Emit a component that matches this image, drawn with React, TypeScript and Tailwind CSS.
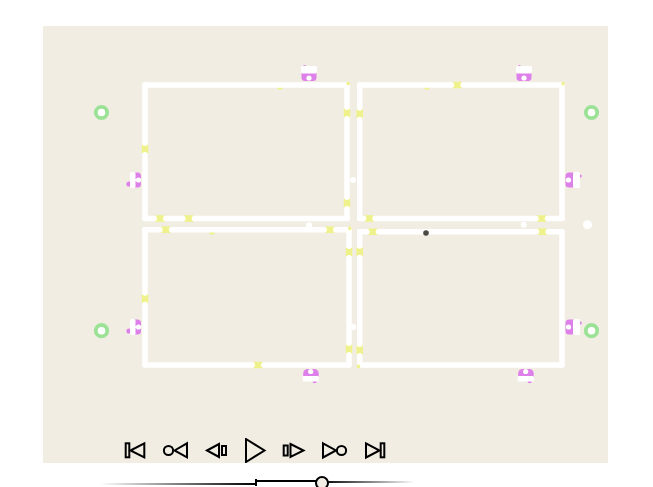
const YELLOW = "#eff28a";
const PINK = "#de80ea";
const GREEN = "#9ce296";

type Gap = [number, number];

// one wall: yellow shows through wherever the white stroke has a gap
function Wall({ x1, y1, x2, y2, gaps }: { x1: number; y1: number; x2: number; y2: number; gaps: number[] }) {
  const horizontal = y1 === y2;
  const start = horizontal ? x1 : y1;
  const end = horizontal ? x2 : y2;
  const stops: Gap[] = [];
  let from = start;
  gaps.forEach((g) => {
    stops.push([from, g - 5.8]);
    from = g + 5.8;
  });
  stops.push([from, end]);
  return (
    <g>
      {gaps.map((g) => (
        <line
          key={g}
          x1={horizontal ? g - 4.5 : x1}
          x2={horizontal ? g + 4.5 : x1}
          y1={horizontal ? y1 : g - 4.5}
          y2={horizontal ? y1 : g + 4.5}
          stroke={YELLOW}
          strokeWidth={6.5}
        />
      ))}
      {stops.map(([a, b]) => (
        <line
          key={a}
          x1={horizontal ? a : x1}
          x2={horizontal ? b : x1}
          y1={horizontal ? y1 : a}
          y2={horizontal ? y1 : b}
          stroke="#fff"
          strokeWidth={5.5}
          strokeLinecap="round"
        />
      ))}
    </g>
  );
}

function Room({
  l,
  t,
  r,
  b,
  top = [],
  right = [],
  bottom = [],
  left = [],
  specks = [],
  corners = [],
}: {
  l: number;
  t: number;
  r: number;
  b: number;
  top?: number[];
  right?: number[];
  bottom?: number[];
  left?: number[];
  specks?: Gap[];
  corners?: Gap[];
}) {
  return (
    <g>
      {specks.map(([x, y]) => (
        <circle key={x} cx={x} cy={y} r={2.8} fill={YELLOW} />
      ))}
      <Wall x1={l} y1={t} x2={r} y2={t} gaps={top} />
      <Wall x1={r} y1={t} x2={r} y2={b} gaps={right} />
      <Wall x1={l} y1={b} x2={r} y2={b} gaps={bottom} />
      <Wall x1={l} y1={t} x2={l} y2={b} gaps={left} />
      {corners.map(([x, y]) => (
        <circle key={x} cx={x} cy={y} r={1.8} fill={YELLOW} />
      ))}
    </g>
  );
}

function Ring({ x, y }: { x: number; y: number }) {
  return <circle cx={x} cy={y} r={5.7} fill="#fff" stroke={GREEN} strokeWidth={3.8} />;
}

function Dot({ x, y, r = 3 }: { x: number; y: number; r?: number }) {
  return <circle cx={x} cy={y} r={r} fill="#fff" />;
}

// door markers, one per side of the plan
function DoorTop({ x }: { x: number }) {
  return (
    <g>
      <circle cx={x - 4.5} cy={66.5} r={1.5} fill={PINK} />
      <path d={`M${x - 7.5} 72h15v5.5a3.5 3.5 0 0 1-3.5 3.5h-8a3.5 3.5 0 0 1-3.5-3.5z`} fill={PINK} />
      <rect x={x - 8} y={66} width={16} height={7.5} rx={1.5} fill="#fff" />
      <Dot x={x} y={78} r={2.6} />
    </g>
  );
}

function DoorBottom({ x }: { x: number }) {
  return (
    <g>
      <circle cx={x + 4} cy={381} r={2.2} fill={PINK} />
      <path d={`M${x - 7.5} 377v-3.5a4.5 4.5 0 0 1 4.5-4.5h6.5a4.5 4.5 0 0 1 4.5 4.5v3.5z`} fill={PINK} />
      <rect x={x - 8} y={376} width={16} height={5.5} rx={1} fill="#fff" />
      <Dot x={x} y={371.5} r={2.6} />
    </g>
  );
}

function DoorLeft({ y }: { y: number }) {
  return (
    <g>
      <circle cx={129} cy={y + 4} r={2.6} fill={PINK} />
      <path d={`M133 ${y - 7.5}h4.5a3.5 3.5 0 0 1 3.5 3.5v8a3.5 3.5 0 0 1-3.5 3.5h-4.5z`} fill={PINK} />
      <rect x={130} y={y - 8} width={5.5} height={16} rx={1.5} fill="#fff" />
      <rect x={135} y={y - 1} width={6} height={2} fill="#fff" />
      <Dot x={138.5} y={y} r={2.6} />
    </g>
  );
}

function DoorRight({ y }: { y: number }) {
  return (
    <g>
      <circle cx={580.3} cy={y - 4} r={1.5} fill={PINK} />
      <path d={`M575 ${y - 7.5}h-6a3.5 3.5 0 0 0-3.5 3.5v8a3.5 3.5 0 0 0 3.5 3.5h6z`} fill={PINK} />
      <rect x={573} y={y - 8} width={7} height={16} rx={1.5} fill="#fff" />
      <Dot x={568.5} y={y} r={2.6} />
    </g>
  );
}

function Plan() {
  return (
    <svg width={565} height={412} viewBox="43 26 565 412" className="block">
      <Room l={145} t={85} r={347} b={218.5} right={[113, 203]} bottom={[160, 188.7]} left={[149]} specks={[[280, 87]]} corners={[[348.2, 83.6]]} />
      <Room l={359.7} t={85} r={562} b={218.5} top={[457.3]} bottom={[369.3, 541.7]} left={[113.7]} specks={[[427, 87]]} corners={[[563.2, 83.6]]} />
      <Room l={145} t={229.7} r={349} b={365} top={[165.7, 330]} right={[252, 349]} bottom={[258]} left={[298.7]} specks={[[212, 232]]} corners={[[349.8, 228.4]]} />
      <Room l={359.7} t={231.7} r={562} b={365} top={[372.7, 542.3]} left={[251.7, 350]} corners={[[358.5, 366.4]]} />

      <Ring x={101.5} y={112.5} />
      <Ring x={591.5} y={112.5} />
      <Ring x={101.5} y={330.7} />
      <Ring x={591.5} y={330.7} />

      <DoorTop x={309} />
      <DoorTop x={524} />
      <DoorBottom x={310.7} />
      <DoorBottom x={525.7} />
      <DoorLeft y={180} />
      <DoorLeft y={327} />
      <DoorRight y={180} />
      <DoorRight y={327} />

      <Dot x={353} y={180} />
      <Dot x={353} y={327} />
      <Dot x={309} y={225} />
      <Dot x={523.7} y={224.7} />
      <Dot x={587.5} y={224.7} r={4.5} />
      <circle cx={426} cy={233} r={2.8} fill="#4a4a42" />
    </svg>
  );
}

// each control sits in a 40x25 box, coordinates are local to it
const controls = [
  { name: "first", body: <><rect x={10.7} y={5.3} width={3.6} height={14} /><path d="M15.5 12.5 29.3 5.3v14z" /></> },
  { name: "back-end", body: <><circle cx={13.5} cy={12.5} r={4.6} /><path d="M19.5 12.5 32 5.3v14z" /></> },
  { name: "step-back", body: <><path d="M12 12.5 24 6v13z" /><rect x={27} y={8} width={4} height={9} /></> },
  { name: "play", body: <path d="M11 1 29.5 12.5 11 24z" /> },
  { name: "step", body: <><rect x={8.7} y={7.5} width={4} height={10} /><path d="M15.5 6 28.5 12.5 15.5 19z" /></> },
  { name: "forward-end", body: <><path d="M8 5.3 21 12.5 8 19.5z" /><circle cx={26.5} cy={12.5} r={4.6} /></> },
  { name: "last", body: <><path d="M11 5.3 24.5 12.5 11 19.5z" /><rect x={25.7} y={5.3} width={3.6} height={14} /></> },
];

export default function App() {
  return (
    <div className="h-[487px] w-[653px] overflow-hidden bg-white">
      <div className="ml-[43px] mt-[26px] flex h-[437px] w-[565px] flex-col bg-[#f1ede3]">
        <Plan />
        <div className="flex pl-[72px]">
          {controls.map((c) => (
            <button key={c.name} aria-label={c.name} className="h-[25px] w-10">
              <svg width={40} height={25} viewBox="0 0 40 25" fill="none" stroke="#000" strokeWidth={2} className="block">
                {c.body}
              </svg>
            </button>
          ))}
        </div>
      </div>

      <div className="relative ml-[100px] flex h-6 w-[315px] items-start">
        <div className="mt-5 h-[2px] w-[155px] bg-linear-to-r from-transparent to-black" />
        <div className="mt-[17px] h-[2px] w-[67px] bg-black" />
        <div className="mt-[18px] h-[2px] w-[93px] bg-linear-to-r from-black to-transparent" />
        <div className="absolute left-[155px] top-4 h-[7px] w-[2px] bg-black" />
        <div className="absolute left-[215px] top-[13px] h-[14px] w-[14px] rounded-full border-2 border-black bg-[#f1ede3]" />
      </div>
    </div>
  );
}
